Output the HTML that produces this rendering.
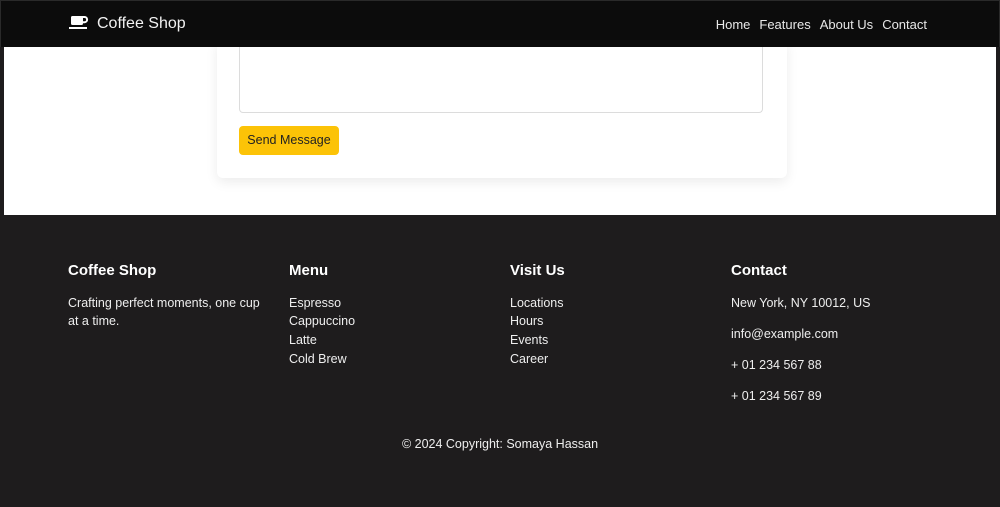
<!DOCTYPE html>
<html><head><meta charset="utf-8"><style>
*{margin:0;padding:0;box-sizing:border-box}
body{width:1000px;height:507px;background:#1e1c1d;font-family:"Liberation Sans",sans-serif;overflow:hidden;position:relative}
.nav{position:absolute;left:0;top:0;width:1000px;height:47px;background:#0c0c0c;border:1px solid #2a2a2a;border-bottom:none}
.brand{position:absolute;left:68px;top:14px;color:#f2f2f2;font-size:16px}
.brand svg{vertical-align:-2px;margin-right:8px}
.links{position:absolute;right:72px;top:16px;color:#e8e8e8;font-size:13px}
.links span{margin-left:9px}
.white{position:absolute;left:4px;top:47px;width:992px;height:168px;background:#fff}
.card{position:absolute;left:217px;top:40px;width:570px;height:138px;background:#fff;border-radius:6px;box-shadow:0 4px 12px rgba(0,0,0,.08)}
.ta{position:absolute;left:239px;top:40px;width:524px;height:73px;border:1px solid #dcdcdc;border-top:none;border-radius:0 0 4px 4px}
.btn{position:absolute;left:239px;top:126px;width:100px;height:29px;background:#fcc307;border-radius:4px;font-size:12.5px;color:#222;text-align:center;line-height:29px}
.col{position:absolute;top:262px;color:#eee;font-size:12.5px;line-height:18.7px}
.col h4{font-size:15px;color:#fff;margin-bottom:13px;font-weight:bold}
.col p{margin-bottom:12.4px}
.copy{position:absolute;top:437px;left:0;width:1000px;text-align:center;color:#eee;font-size:12.5px}
</style></head><body>
<div class="white"></div>
<div class="card"></div>
<div class="ta"></div>
<div class="btn">Send Message</div>
<div class="nav">
<div class="brand"><svg width="20" height="15" viewBox="0 0 20 15"><rect x="2" y="1" width="12" height="9" rx="1.5" fill="#fff"/><path d="M13 2h2.5a2.6 2.6 0 0 1 0 5.2H13" fill="none" stroke="#fff" stroke-width="2"/><rect x="0" y="12" width="18" height="2" fill="#fff"/></svg>Coffee Shop</div>
<div class="links"><span>Home</span><span>Features</span><span>About Us</span><span>Contact</span></div>
</div>
<div class="col" style="left:68px;width:205px"><h4>Coffee Shop</h4>Crafting perfect moments, one cup at a time.</div>
<div class="col" style="left:289px"><h4>Menu</h4>Espresso<br>Cappuccino<br>Latte<br>Cold Brew</div>
<div class="col" style="left:510px"><h4>Visit Us</h4>Locations<br>Hours<br>Events<br>Career</div>
<div class="col" style="left:731px"><h4>Contact</h4><p>New York, NY 10012, US</p><p>info@example.com</p><p>+ 01 234 567 88</p><p>+ 01 234 567 89</p></div>
<div class="copy">© 2024 Copyright: Somaya Hassan</div>
</body></html>
